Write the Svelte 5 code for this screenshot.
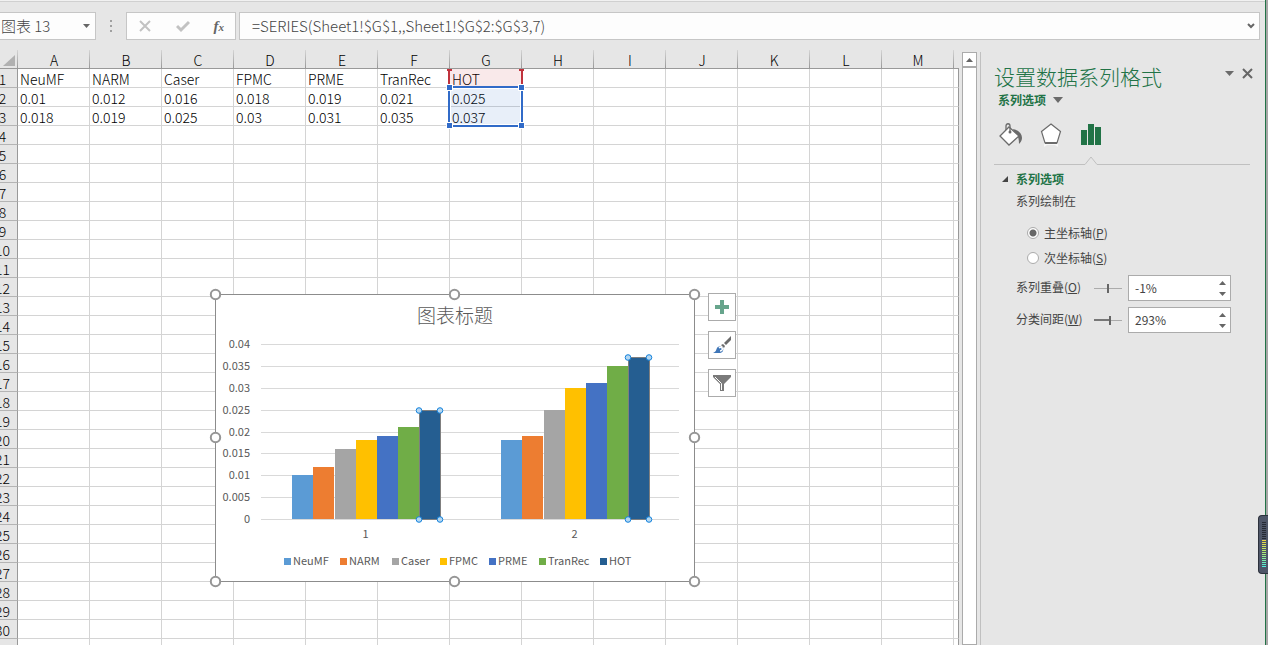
<script>
  const columns = ['A', 'B', 'C', 'D', 'E', 'F', 'G', 'H', 'I', 'J', 'K', 'L', 'M'];
  const rowCount = 31;

  let series = [
    { name: 'NeuMF', values: [0.01, 0.018], color: '#5b9bd5' },
    { name: 'NARM', values: [0.012, 0.019], color: '#ed7d31' },
    { name: 'Caser', values: [0.016, 0.025], color: '#a5a5a5' },
    { name: 'FPMC', values: [0.018, 0.03], color: '#ffc000' },
    { name: 'PRME', values: [0.019, 0.031], color: '#4472c4' },
    { name: 'TranRec', values: [0.021, 0.035], color: '#70ad47' },
    { name: 'HOT', values: [0.025, 0.037], color: '#255e91' },
  ];
  const legendX = [69, 125, 177, 225, 274, 324, 385];

  let selected = 6;
  let nameBox = '图表 13';
  let formula = '=SERIES(Sheet1!$G$1,,Sheet1!$G$2:$G$3,7)';
  let axis = 'primary';
  let overlap = -1;
  let gap = 293;

  // Chart plot area, relative to the chart frame
  const plot = { left: 46, right: 464, top: 50, bottom: 225 };
  const maxValue = 0.04;
  const ticks = [0.04, 0.035, 0.03, 0.025, 0.02, 0.015, 0.01, 0.005, 0];
  const handles = [[0, 0], [239, 0], [479, 0], [0, 143], [479, 143], [0, 287], [239, 287], [479, 287]];
  const categoryWidth = (plot.right - plot.left) / 2;

  function y(value) {
    return Math.round(plot.bottom - (value / maxValue) * (plot.bottom - plot.top));
  }

  $: barWidth = categoryWidth / (7 - (6 * overlap) / 100 + gap / 100);
  $: bars = series.flatMap((s, i) =>
    s.values.map((v, c) => ({
      x: Math.round(plot.left + c * categoryWidth + barWidth * (gap / 200 + i * (1 - overlap / 100)) + 0.7),
      y: y(v),
      color: s.color,
      active: i === selected,
    }))
  );

  function cell(row, col) {
    if (!series[col]) return '';
    if (row === 1) return series[col].name;
    return series[col].values[row - 2] ?? '';
  }
</script>

<div class="window">
  <main class="app">
    <div class="ribbon-edge"></div>
    <div class="formula-bar">
      <div class="name-box">
        <input type="text" aria-label="名称框" bind:value={nameBox} />
        <button class="plain" aria-label="展开名称框">
          <svg width="7" height="4"><path d="M0 0h7L3.5 4z" fill="#666" /></svg>
        </button>
      </div>
      <svg class="grip" width="3" height="12"><path d="M0 1h2M0 6h2M0 11h2" stroke="#a0a0a0" stroke-width="2" /></svg>
      <div class="formula-tools">
        <button class="plain" aria-label="取消">
          <svg width="14" height="14" fill="none" stroke="#c2c2c2" stroke-width="2"><path d="M2 2l10 10M12 2L2 12" /></svg>
        </button>
        <button class="plain" aria-label="输入">
          <svg width="14" height="14" fill="none" stroke="#c2c2c2" stroke-width="3"><path d="M1 7l4 4 8-8" /></svg>
        </button>
        <button class="plain fx" aria-label="插入函数"><i>f</i><i class="sub">x</i></button>
      </div>
      <div class="formula">
        <input type="text" aria-label="编辑栏" bind:value={formula} />
        <button class="plain" aria-label="展开编辑栏">
          <svg width="8" height="6" fill="none" stroke="#666" stroke-width="2"><path d="M1 1l3 3 3-3" /></svg>
        </button>
      </div>
    </div>

    <div class="workspace">
      <section class="sheet">
        <table>
          <colgroup>
            <col class="row-col" />
            {#each columns as _}<col class="data-col" />{/each}
            <col />
          </colgroup>
          <thead>
            <tr>
              <th class="corner"><svg width="12" height="11"><path d="M12 0v11H0z" fill="#b1b1b1" /></svg></th>
              {#each columns as column}<th>{column}</th>{/each}
              <th class="rest"></th>
            </tr>
          </thead>
          <tbody>
            {#each Array(rowCount) as _, r}
              <tr>
                <th>{r + 1}</th>
                {#each columns as _, c}<td>{cell(r + 1, c)}</td>{/each}
                <td></td>
              </tr>
            {/each}
          </tbody>
        </table>

        <div class="range name-range"></div>
        <div class="range value-range"><i></i><i></i><i></i><i></i></div>

        <svg class="chart" width="496" height="304" viewBox="-8 -8 496 304">
          <rect x="0.5" y="0.5" width="479" height="287" fill="#fff" stroke="#8c8c8c" />
          <text class="title" x="240" y="29">图表标题</text>
          {#each ticks as tick}
            <line x1={plot.left} x2={plot.right} y1={y(tick) + 0.5} y2={y(tick) + 0.5} stroke="#d9d9d9" />
            <text class="tick" x="35" y={y(tick) + 4}>{tick}</text>
          {/each}
          {#each bars as bar}
            <rect x={bar.x} y={bar.y} width="21" height={plot.bottom - bar.y} fill={bar.color} />
          {/each}
          {#each bars.filter((b) => b.active) as bar}
            <rect x={bar.x + 0.5} y={bar.y + 0.5} width="21" height={plot.bottom - bar.y} fill="none" stroke="#7f7f7f" />
            {#each [0, 21] as dx}
              <circle cx={bar.x + dx} cy={bar.y + 0.5} r="2.8" fill="#b3d7f2" stroke="#1482dc" />
              <circle cx={bar.x + dx} cy={plot.bottom + 0.5} r="2.8" fill="#b3d7f2" stroke="#1482dc" />
            {/each}
          {/each}
          {#each [1, 2] as category, c}
            <text class="category" x={plot.left + categoryWidth * (c + 0.5)} y="244">{category}</text>
          {/each}
          {#each series as s, i}
            <rect x={legendX[i]} y="264" width="7" height="7" fill={s.color} />
            <text class="legend" x={legendX[i] + 9} y="271">{s.name}</text>
          {/each}
          {#each handles as [hx, hy]}
            <circle cx={hx + 0.5} cy={hy + 0.5} r="4.7" fill="#fff" stroke="#969696" stroke-width="2" />
          {/each}
        </svg>

        <div class="chart-tools">
          <button aria-label="图表元素">
            <svg width="18" height="18"><path d="M7 2h4v5h5v4h-5v5H7v-5H2V7h5z" fill="#67a58c" /></svg>
          </button>
          <button aria-label="图表样式">
            <svg width="18" height="18">
              <path d="M18 0v4l-5 5-2-2z" fill="#6b6b6b" />
              <path d="M10 8l2 2-1 2-3-3z" fill="#6b6b6b" />
              <path d="M0 17c3-1 3-3 4-5 1-2 4-2 6 0 1 3-1 5-4 5z" fill="#3f76b8" />
              <path d="M6 12c1-1 2-1 3 0 1 1 0 3-2 3" fill="none" stroke="#fff" stroke-width="1.5" />
            </svg>
          </button>
          <button aria-label="图表筛选器">
            <svg width="18" height="18">
              <path d="M0 1h18v2l-7 7v7H7v-7L0 3z" fill="#7a7a7a" />
              <path d="M2 3l6.500 6.500V16" fill="none" stroke="#fff" />
            </svg>
          </button>
        </div>
      </section>

      <div class="scrollbar">
        <button class="plain" aria-label="向上滚动"><svg width="7" height="4"><path d="M0 4h7L3.5 0z" fill="#666" /></svg></button>
        <div class="track"></div>
      </div>

      <aside class="pane">
        <header>
          <h1>设置数据系列格式</h1>
          <button class="plain" aria-label="任务窗格选项"><svg width="9" height="5"><path d="M0 0h9L4.5 5z" fill="#6b6b6b" /></svg></button>
          <button class="plain" aria-label="关闭"><svg width="11" height="11" fill="none" stroke="#666" stroke-width="2"><path d="M1 1l9 9M10 1l-9 9" /></svg></button>
        </header>
        <button class="plain menu">系列选项<svg width="10" height="6"><path d="M0 0h10L5 6z" fill="#6b6b6b" /></svg></button>

        <nav>
          <button class="plain" aria-label="填充与线条">
            <svg width="24" height="24" fill="none" stroke="#6b6b6b">
              <path d="M14 6c5 1 9 4 9 9 0 3-2 5-3 6 0-6-1-9-5-12z" fill="#6b6b6b" stroke="none" />
              <path d="M10 4l10 9-10 9-9-9z" fill="#fff" stroke-width="1.3" />
              <path d="M7 7V3c0-3 4-3 4 0v6" stroke-width="1.3" />
              <circle cx="11" cy="9" r="1.5" fill="#6b6b6b" stroke="none" />
            </svg>
          </button>
          <button class="plain" aria-label="效果">
            <svg width="24" height="24">
              <path d="M5 20h14v4l-3-2H8l-3 2z" fill="#f7f7f7" />
              <path d="M12 1l9.500 7.500L18 20H6L2.500 8.500z" fill="#fff" stroke="#6b6b6b" stroke-width="1.200" />
              <path d="M6 20h12" stroke="#6b6b6b" stroke-width="2" />
            </svg>
          </button>
          <button class="plain" aria-label="系列选项">
            <svg width="24" height="24" fill="#217346"><path d="M2 7h6v15H2zM9 1h6v21H9zM16 4h6v18h-6z" /></svg>
          </button>
        </nav>
        <div class="divider">
          <span></span><svg width="14" height="9" fill="none" stroke="#c0c0c0"><path d="M0 8.500h1L7 1l6 7.500h1" /></svg><span class="grow"></span>
        </div>

        <h2><svg width="6" height="6"><path d="M6 0v6H0z" fill="#444" /></svg>系列选项</h2>
        <fieldset>
          <legend>系列绘制在</legend>
          <label><input type="radio" bind:group={axis} value="primary" /><span>主坐标轴(<u>P</u>)</span></label>
          <label><input type="radio" bind:group={axis} value="secondary" /><span>次坐标轴(<u>S</u>)</span></label>
        </fieldset>

        <div class="option">
          <label for="overlap">系列重叠(<u>O</u>)</label>
          <input type="range" aria-label="系列重叠" min="-100" max="100" bind:value={overlap} />
          <div class="spin">
            <input id="overlap" type="text" value="{overlap}%" />
            <div class="arrows">
              <button class="plain" aria-label="增加重叠" on:click={() => (overlap += 1)}><svg width="7" height="4"><path d="M0 4h7L3.500 0z" fill="#666" /></svg></button>
              <button class="plain" aria-label="减少重叠" on:click={() => (overlap -= 1)}><svg width="7" height="4"><path d="M0 0h7L3.500 4z" fill="#666" /></svg></button>
            </div>
          </div>
        </div>
        <div class="option">
          <label for="gap">分类间距(<u>W</u>)</label>
          <input class="filled" type="range" aria-label="分类间距" min="0" max="500" bind:value={gap} />
          <div class="spin">
            <input id="gap" type="text" value="{gap}%" />
            <div class="arrows">
              <button class="plain" aria-label="增加间距" on:click={() => (gap += 1)}><svg width="7" height="4"><path d="M0 4h7L3.500 0z" fill="#666" /></svg></button>
              <button class="plain" aria-label="减少间距" on:click={() => (gap -= 1)}><svg width="7" height="4"><path d="M0 0h7L3.500 4z" fill="#666" /></svg></button>
            </div>
          </div>
        </div>
      </aside>
    </div>
  </main>
  <div class="meter"><div></div></div>
</div>

<style>
  :global(body) {
    overflow: hidden;
  }

  .window {
    position: relative;
    height: 100vh;
    padding-right: 2px;
    box-sizing: border-box;
    background: #a6a6a6;
    font-family: "Noto Sans CJK SC", "Liberation Sans", sans-serif;
    font-size: 12px;
    color: #444;
  }

  .app {
    display: flex;
    flex-direction: column;
    height: 100%;
    box-sizing: border-box;
    border-right: 1px solid #217346;
    background: #e6e6e6;
  }

  .plain {
    display: flex;
    align-items: center;
    justify-content: center;
    padding: 0;
    border: 0;
    background: none;
    color: inherit;
    font: inherit;
  }

  svg {
    display: block;
    flex: none;
  }

  input {
    box-sizing: border-box;
    margin: 0;
    font: inherit;
    color: inherit;
  }

  input[type="text"] {
    flex: 1;
    min-width: 0;
    padding: 0 0 2px;
    border: 0;
    outline: 0;
    background: none;
  }

  .ribbon-edge {
    height: 1px;
    border-bottom: 1px solid #d0d0d0;
    background: #f1f1f1;
  }

  .formula-bar {
    display: flex;
    align-items: center;
    padding: 10px 5px 10px 0;
    font-size: 15px;
    font-weight: 300;
  }

  .name-box,
  .formula-tools,
  .formula {
    display: flex;
    align-items: center;
    height: 28px;
    box-sizing: border-box;
    border: 1px solid #c6c6c6;
    background: #fdfdfd;
  }

  .name-box {
    width: 96px;
    padding: 0 5px 0 1px;
    border-left: 0;
  }

  .grip {
    margin: 0 14px;
  }

  .formula-tools {
    justify-content: space-between;
    width: 110px;
    margin: 0 3px 0 -1px;
    padding: 0 11px;
  }

  .fx {
    align-items: baseline;
    font: bold 15px "Liberation Serif", serif;
    color: #666;
  }

  .sub {
    font-size: 11px;
  }

  .formula {
    flex: 1;
    padding: 0 4px 0 12px;
  }

  .workspace {
    display: flex;
    flex: 1;
    min-height: 0;
  }

  .sheet {
    position: relative;
    flex: 1;
    overflow: hidden;
  }

  table {
    width: calc(100% + 12px);
    margin-left: -12px;
    table-layout: fixed;
    border-spacing: 0;
    font-size: 14px;
    line-height: 16px;
    font-weight: 300;
    color: #000;
  }

  .row-col {
    width: 30px;
  }

  .data-col {
    width: 72px;
  }

  th,
  td {
    height: 16px;
    padding: 2px 0 0;
    border-right: 1px solid #d4d4d4;
    border-bottom: 1px solid #d4d4d4;
    white-space: nowrap;
  }

  th {
    border-right-color: #999;
    border-bottom-color: #b4b4b4;
    background: #e6e6e6;
    font-weight: 300;
  }

  thead th {
    border-right: 0;
    border-bottom-color: #999;
    background: linear-gradient(#d4d4d4, #999) right / 1px 100% no-repeat #e6e6e6;
  }

  .corner svg {
    margin-left: 15px;
  }

  thead .rest {
    background: #e6e6e6;
  }

  td {
    padding-left: 2px;
    background: #fff;
  }

  td:last-child {
    padding: 0;
    border-right-color: #999;
  }

  .range {
    position: absolute;
    left: 448px;
    width: 75px;
    box-sizing: border-box;
  }

  .name-range {
    top: 19px;
    height: 17px;
    border: 2px solid #c0323c;
    border-width: 0 2px;
    background: rgba(200, 40, 50, 0.1);
  }

  .name-range::before,
  .name-range::after {
    content: "";
    position: absolute;
    top: 0;
    left: -3px;
    width: 5px;
    height: 2px;
    background: #c0323c;
  }

  .name-range::after {
    left: auto;
    right: -3px;
  }

  .value-range {
    top: 36px;
    height: 41px;
    border: 2px solid #316bc8;
    background: rgba(49, 107, 200, 0.11);
    box-shadow: inset 0 0 0 1px #fff;
  }

  .value-range i {
    position: absolute;
    top: -4px;
    left: -4px;
    width: 5px;
    height: 5px;
    border: 1px solid #fff;
    background: #316bc8;
  }

  .value-range i:nth-child(even) {
    left: auto;
    right: -4px;
  }

  .value-range i:nth-child(n + 3) {
    top: auto;
    bottom: -4px;
  }

  .chart {
    position: absolute;
    left: 207px;
    top: 236px;
    fill: #595959;
    font-size: 11px;
  }

  .title,
  .category {
    text-anchor: middle;
  }

  .title {
    font-size: 19px;
    font-weight: 300;
  }

  .tick {
    text-anchor: end;
  }

  .chart-tools {
    position: absolute;
    left: 708px;
    top: 243px;
    display: grid;
    gap: 10px;
  }

  .chart-tools button {
    display: flex;
    align-items: center;
    justify-content: center;
    width: 28px;
    height: 28px;
    padding: 0;
    border: 1px solid #ababab;
    background: #fff;
  }

  .scrollbar {
    display: flex;
    flex-direction: column;
    width: 15px;
    margin: 2px 3px 0;
  }

  .scrollbar button {
    height: 15px;
    border: 1px solid #ababab;
    background: #fff;
  }

  .track {
    flex: 1;
    border: 1px solid #ababab;
    background: #fff;
  }

  .pane {
    width: 285px;
    box-sizing: border-box;
    margin-top: 2px;
    padding: 10px 15px 0 13px;
    border-left: 1px solid #c0c0c0;
  }

  header {
    display: flex;
    align-items: flex-start;
    gap: 8px;
    height: 28px;
    margin-right: -3px;
  }

  header button {
    height: 22px;
  }

  h1 {
    flex: 1;
    margin: 0;
    font-size: 21px;
    line-height: 28px;
    font-weight: 300;
    color: #217346;
  }

  .menu {
    gap: 7px;
    margin-left: 4px;
    line-height: 20px;
    font-weight: bold;
    color: #217346;
  }

  nav {
    display: flex;
    gap: 16px;
    margin: 13px 0 0 5px;
  }

  .divider {
    display: flex;
    align-items: flex-end;
    margin-top: 9px;
  }

  .divider span {
    width: 90px;
    border-bottom: 1px solid #c0c0c0;
  }

  .divider .grow {
    flex: 1;
  }

  h2 {
    display: flex;
    align-items: center;
    gap: 8px;
    margin: 4px 0 0 8px;
    font-size: 12px;
    line-height: 20px;
    color: #217346;
  }

  fieldset {
    margin: 0 0 0 22px;
    padding: 0;
    border: 0;
  }

  legend {
    margin-bottom: 7px;
    padding: 0;
    line-height: 24px;
  }

  fieldset label {
    display: flex;
    align-items: center;
    gap: 5px;
    height: 25px;
    margin-left: 11px;
  }

  input[type="radio"] {
    width: 12px;
    height: 12px;
    appearance: none;
    border: 1px solid #ababab;
    border-radius: 50%;
    background: #fff;
  }

  input[type="radio"]:checked {
    background: radial-gradient(#666 0 3px, #fff 4px);
  }

  .option {
    display: flex;
    align-items: center;
    height: 26px;
    margin: 5px 0 6px 22px;
  }

  .option label {
    width: 78px;
    padding-bottom: 4px;
  }

  input[type="range"] {
    width: 28px;
    height: 9px;
    appearance: none;
    background: linear-gradient(#ababab, #ababab) center / 100% 1px no-repeat;
  }

  input.filled {
    background:
      linear-gradient(#777, #777) left / 16px 2px no-repeat,
      linear-gradient(#ababab, #ababab) center / 100% 1px no-repeat;
  }

  input[type="range"]::-webkit-slider-thumb {
    width: 2px;
    height: 9px;
    appearance: none;
    background: #666;
  }

  .spin {
    display: flex;
    width: 103px;
    height: 26px;
    box-sizing: border-box;
    margin-left: 6px;
    padding: 0 4px 0 6px;
    border: 1px solid #ababab;
    background: #fff;
  }

  .arrows {
    display: flex;
    flex-direction: column;
    justify-content: center;
    gap: 7px;
  }

  .meter {
    position: absolute;
    right: 0;
    top: 515px;
    width: 10px;
    height: 59px;
    box-sizing: border-box;
    padding: 6px 2px 6px 3px;
    border: 1px solid #2c313c;
    border-right: 0;
    border-radius: 4px 0 0 4px;
    background: #4e5668;
  }

  .meter div {
    height: 45px;
    background:
      repeating-linear-gradient(transparent 0 1px, #4e5668 1px 2px),
      linear-gradient(#252a34 0 18px, #f0d840 18px, #a8f078 32px, #48f0e0);
  }
</style>
